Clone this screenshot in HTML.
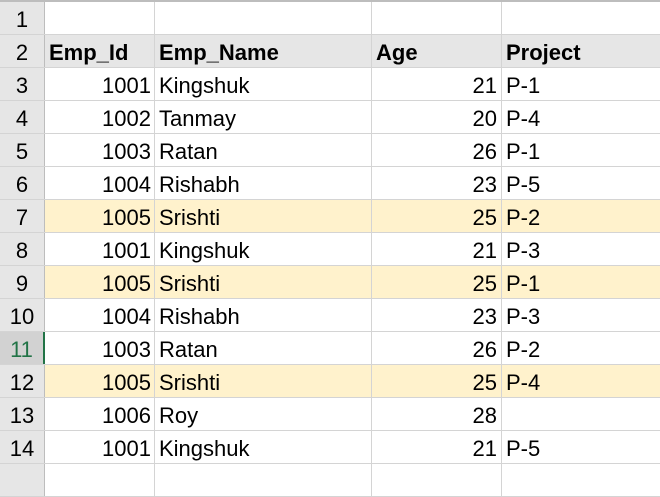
<!DOCTYPE html>
<html><head><style>
body{margin:0;width:660px;height:470px;overflow:hidden;background:#fff;font-family:"Liberation Sans",sans-serif;font-size:22px;color:#000}
.r{position:absolute;left:0;width:660px;height:33px;border-bottom:1px solid #d4d4d4;box-sizing:border-box}
.c{position:absolute;top:0;height:32px;line-height:35px;box-sizing:border-box;border-right:1px solid #d4d4d4;white-space:nowrap;overflow:hidden}
.h{left:0;width:45px;background:#e6e6e6;text-align:center;border-right:1px solid #bdbdbd}
.a{left:45px;width:110px;text-align:right;padding-right:3px}
.b{left:155px;width:217px;padding-left:4px}
.cc{left:372px;width:130px;text-align:right;padding-right:4px}
.d{left:502px;width:158px;padding-left:4px;border-right:none}
.y .a,.y .b,.y .cc,.y .d{background:#fff2cc}
.g .a,.g .b,.g .cc,.g .d{background:#e6e6e6;font-weight:bold;text-align:left;padding-left:4px}
.sel .h{background:#d2d2d2;color:#217346;border-right:2px solid #217346}
</style></head><body>
<div style="position:absolute;left:0;top:0;width:660px;height:2px;background:#bdbdbd"></div>
<div class="r" style="top:2px"><div class="c h">1</div><div class="c a"></div><div class="c b"></div><div class="c cc"></div><div class="c d"></div></div>
<div class="r g" style="top:35px"><div class="c h">2</div><div class="c a">Emp_Id</div><div class="c b">Emp_Name</div><div class="c cc">Age</div><div class="c d">Project</div></div>
<div class="r" style="top:68px"><div class="c h">3</div><div class="c a">1001</div><div class="c b">Kingshuk</div><div class="c cc">21</div><div class="c d">P-1</div></div>
<div class="r" style="top:101px"><div class="c h">4</div><div class="c a">1002</div><div class="c b">Tanmay</div><div class="c cc">20</div><div class="c d">P-4</div></div>
<div class="r" style="top:134px"><div class="c h">5</div><div class="c a">1003</div><div class="c b">Ratan</div><div class="c cc">26</div><div class="c d">P-1</div></div>
<div class="r" style="top:167px"><div class="c h">6</div><div class="c a">1004</div><div class="c b">Rishabh</div><div class="c cc">23</div><div class="c d">P-5</div></div>
<div class="r y" style="top:200px"><div class="c h">7</div><div class="c a">1005</div><div class="c b">Srishti</div><div class="c cc">25</div><div class="c d">P-2</div></div>
<div class="r" style="top:233px"><div class="c h">8</div><div class="c a">1001</div><div class="c b">Kingshuk</div><div class="c cc">21</div><div class="c d">P-3</div></div>
<div class="r y" style="top:266px"><div class="c h">9</div><div class="c a">1005</div><div class="c b">Srishti</div><div class="c cc">25</div><div class="c d">P-1</div></div>
<div class="r" style="top:299px"><div class="c h">10</div><div class="c a">1004</div><div class="c b">Rishabh</div><div class="c cc">23</div><div class="c d">P-3</div></div>
<div class="r sel" style="top:332px"><div class="c h">11</div><div class="c a">1003</div><div class="c b">Ratan</div><div class="c cc">26</div><div class="c d">P-2</div></div>
<div class="r y" style="top:365px"><div class="c h">12</div><div class="c a">1005</div><div class="c b">Srishti</div><div class="c cc">25</div><div class="c d">P-4</div></div>
<div class="r" style="top:398px"><div class="c h">13</div><div class="c a">1006</div><div class="c b">Roy</div><div class="c cc">28</div><div class="c d"></div></div>
<div class="r" style="top:431px"><div class="c h">14</div><div class="c a">1001</div><div class="c b">Kingshuk</div><div class="c cc">21</div><div class="c d">P-5</div></div>
<div class="r" style="top:464px"><div class="c h"></div><div class="c a"></div><div class="c b"></div><div class="c cc"></div><div class="c d"></div></div>
</body></html>
